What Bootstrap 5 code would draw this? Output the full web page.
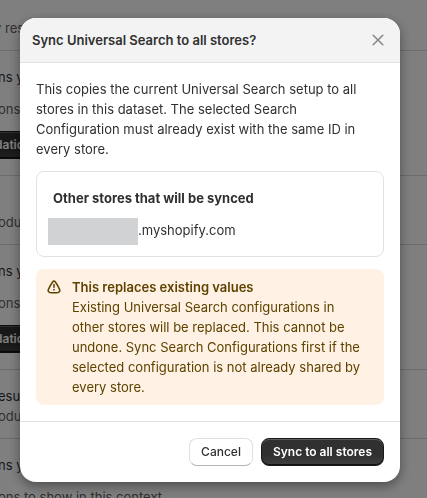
<!DOCTYPE html>
<html lang="en">
<head>
<meta charset="utf-8">
<meta name="viewport" content="width=device-width, initial-scale=1">
<title>Sync Universal Search</title>
<link href="https://cdn.jsdelivr.net/npm/bootstrap@5.3.0/dist/css/bootstrap.min.css" rel="stylesheet">
<style>
body { font: 420 13px/20px Inter, "Liberation Sans", sans-serif; color: #303030; height: 100vh; overflow: hidden; }
.settings { margin-left: -2px; white-space: nowrap; }
.settings section { border-bottom: 1px solid #d8d8d8; color: #616161; }
.settings h2, .settings p { font-size: 13px; line-height: 20px; margin: 0; font-weight: 420; }
.settings h2 { color: #303030; }
.intro { padding: 18px 0 12px; }
.intro, .settings .btn { text-indent: -4px; }
.field { padding: 16px 0; }
.field p { margin: 12px 0; }
.option { padding: 16px 0 12px; }
.settings section:last-child { border: 0; padding-bottom: 0; }
.settings section:last-child p { margin-bottom: 0; }
.btn { font-size: 12px; line-height: 16px; font-weight: 500; border-radius: 8px; padding: 5px 11px; }
.btn-solid, .btn-solid:hover { color: #fff; background: linear-gradient(#303030 60%, #404040); border-color: #1a1a1a; box-shadow: inset 0 1px #5c5c5c, inset 0 -1px #111; font-weight: 600; }
.settings .btn { border-radius: 0; padding: 5px 0; display: block; min-width: 80px; text-align: left; }
.btn-plain, .btn-plain:hover { color: #303030; background: #fff; border-color: #e0e0e0; border-bottom-color: #b5b5b5; }
.sync-dialog { max-width: none; margin: 18px 27px 16px 20px; }
.sync-dialog .modal-content { border: 0; border-radius: 16px; color: #303030; box-shadow: 0 4px 12px #0006; overflow: hidden; }
.sync-dialog .modal-header { background: #f3f3f3; padding: 12px; border-radius: 0; border-color: #e1e1e1; }
.sync-dialog .modal-title { font-size: 13px; line-height: 20px; font-weight: 600; }
.sync-dialog .modal-body { gap: 12px; }
.close-button { width: 20px; height: 20px; color: #858585; }
.store-box { border: 1px solid #e1e1e1; border-radius: 8px; padding: 16px 11px 11px; }
.store-box h2 { font-size: 13px; line-height: 20px; font-weight: 650; margin: 0 5px 10px; }
.redacted { width: 90px; height: 27px; background: #d0d2d4; }
.store-domain { padding-top: 2px; }
.notice { background: #fff1e3; color: #5e4200; border-radius: 8px; padding: 8px 16px 8px 10px; gap: 10px; }
.notice h2 { font-size: 13px; line-height: 20px; font-weight: 600; margin: 0; }
.sync-dialog .modal-footer { padding: 16px; gap: 8px; border-color: #e1e1e1; }
</style>
<script src="https://cdn.jsdelivr.net/npm/bootstrap@5.3.0/dist/js/bootstrap.bundle.min.js"></script>
</head>
<body>
<main class="settings" aria-hidden="true">
  <section class="intro"><p>y results</p></section>
  <section class="field"><h2>ns y</h2><p>ons</p><button class="btn btn-solid" type="button" tabindex="-1">dation</button></section>
  <section class="option"><h2>&nbsp;</h2><p>odu</p></section>
  <section class="field"><h2>ns y</h2><p>ons</p><button class="btn btn-solid" type="button" tabindex="-1">dation</button></section>
  <section class="option"><h2>esu</h2><p>odu</p></section>
  <section class="field"><h2>ns y</h2><p>ons to show in this context</p></section>
</main>
<div class="modal-backdrop show"></div>
<div class="modal d-block overflow-hidden" role="dialog" aria-modal="true" aria-labelledby="sync-title">
  <div class="modal-dialog sync-dialog">
    <div class="modal-content">
      <div class="modal-header d-flex justify-content-between align-items-center">
        <h1 class="modal-title" id="sync-title">Sync Universal Search to all stores?</h1>
        <button class="close-button border-0 bg-transparent p-0 d-flex align-items-center justify-content-center" type="button" aria-label="Close">
          <svg width="12" height="12" viewBox="0 0 12 12" fill="none" stroke="currentColor" stroke-width="1.5" stroke-linecap="round"><path d="M1.2 1.2l9.6 9.6M10.8 1.2l-9.6 9.6"/></svg>
        </button>
      </div>
      <div class="modal-body p-3 d-flex flex-column">
        <p class="mb-0">This copies the current Universal Search setup to all stores in this dataset. The selected Search Configuration must already exist with the same ID in every store.</p>
        <section class="store-box">
          <h2>Other stores that will be synced</h2>
          <div class="d-flex align-items-start"><span class="redacted"></span><span class="store-domain">.myshopify.com</span></div>
        </section>
        <section class="notice d-flex align-items-start">
          <svg class="flex-shrink-0" width="16" height="20" viewBox="0 0 16 20" fill="none" stroke="currentColor" stroke-width="1.5" stroke-linecap="round" stroke-linejoin="round"><path d="M6.8 4.7Q8 3.200 9.200 4.700Q11.900 8.400 13.700 12.600Q14.400 14.900 12.200 15.400Q8 16 3.800 15.400Q1.600 14.900 2.300 12.600Q4.100 8.400 6.800 4.700Z"/><path d="M8 7.500V10.200"/><circle cx="8" cy="12.700" r=".9" fill="currentColor" stroke="none"/></svg>
          <div><h2>This replaces existing values</h2><p class="mb-0">Existing Universal Search configurations in other stores will be replaced. This cannot be undone. Sync Search Configurations first if the selected configuration is not already shared by every store.</p></div>
        </section>
      </div>
      <div class="modal-footer">
        <button class="btn btn-plain m-0" type="button">Cancel</button>
        <button class="btn btn-solid m-0" type="button">Sync to all stores</button>
      </div>
    </div>
  </div>
</div>
</body>
</html>
